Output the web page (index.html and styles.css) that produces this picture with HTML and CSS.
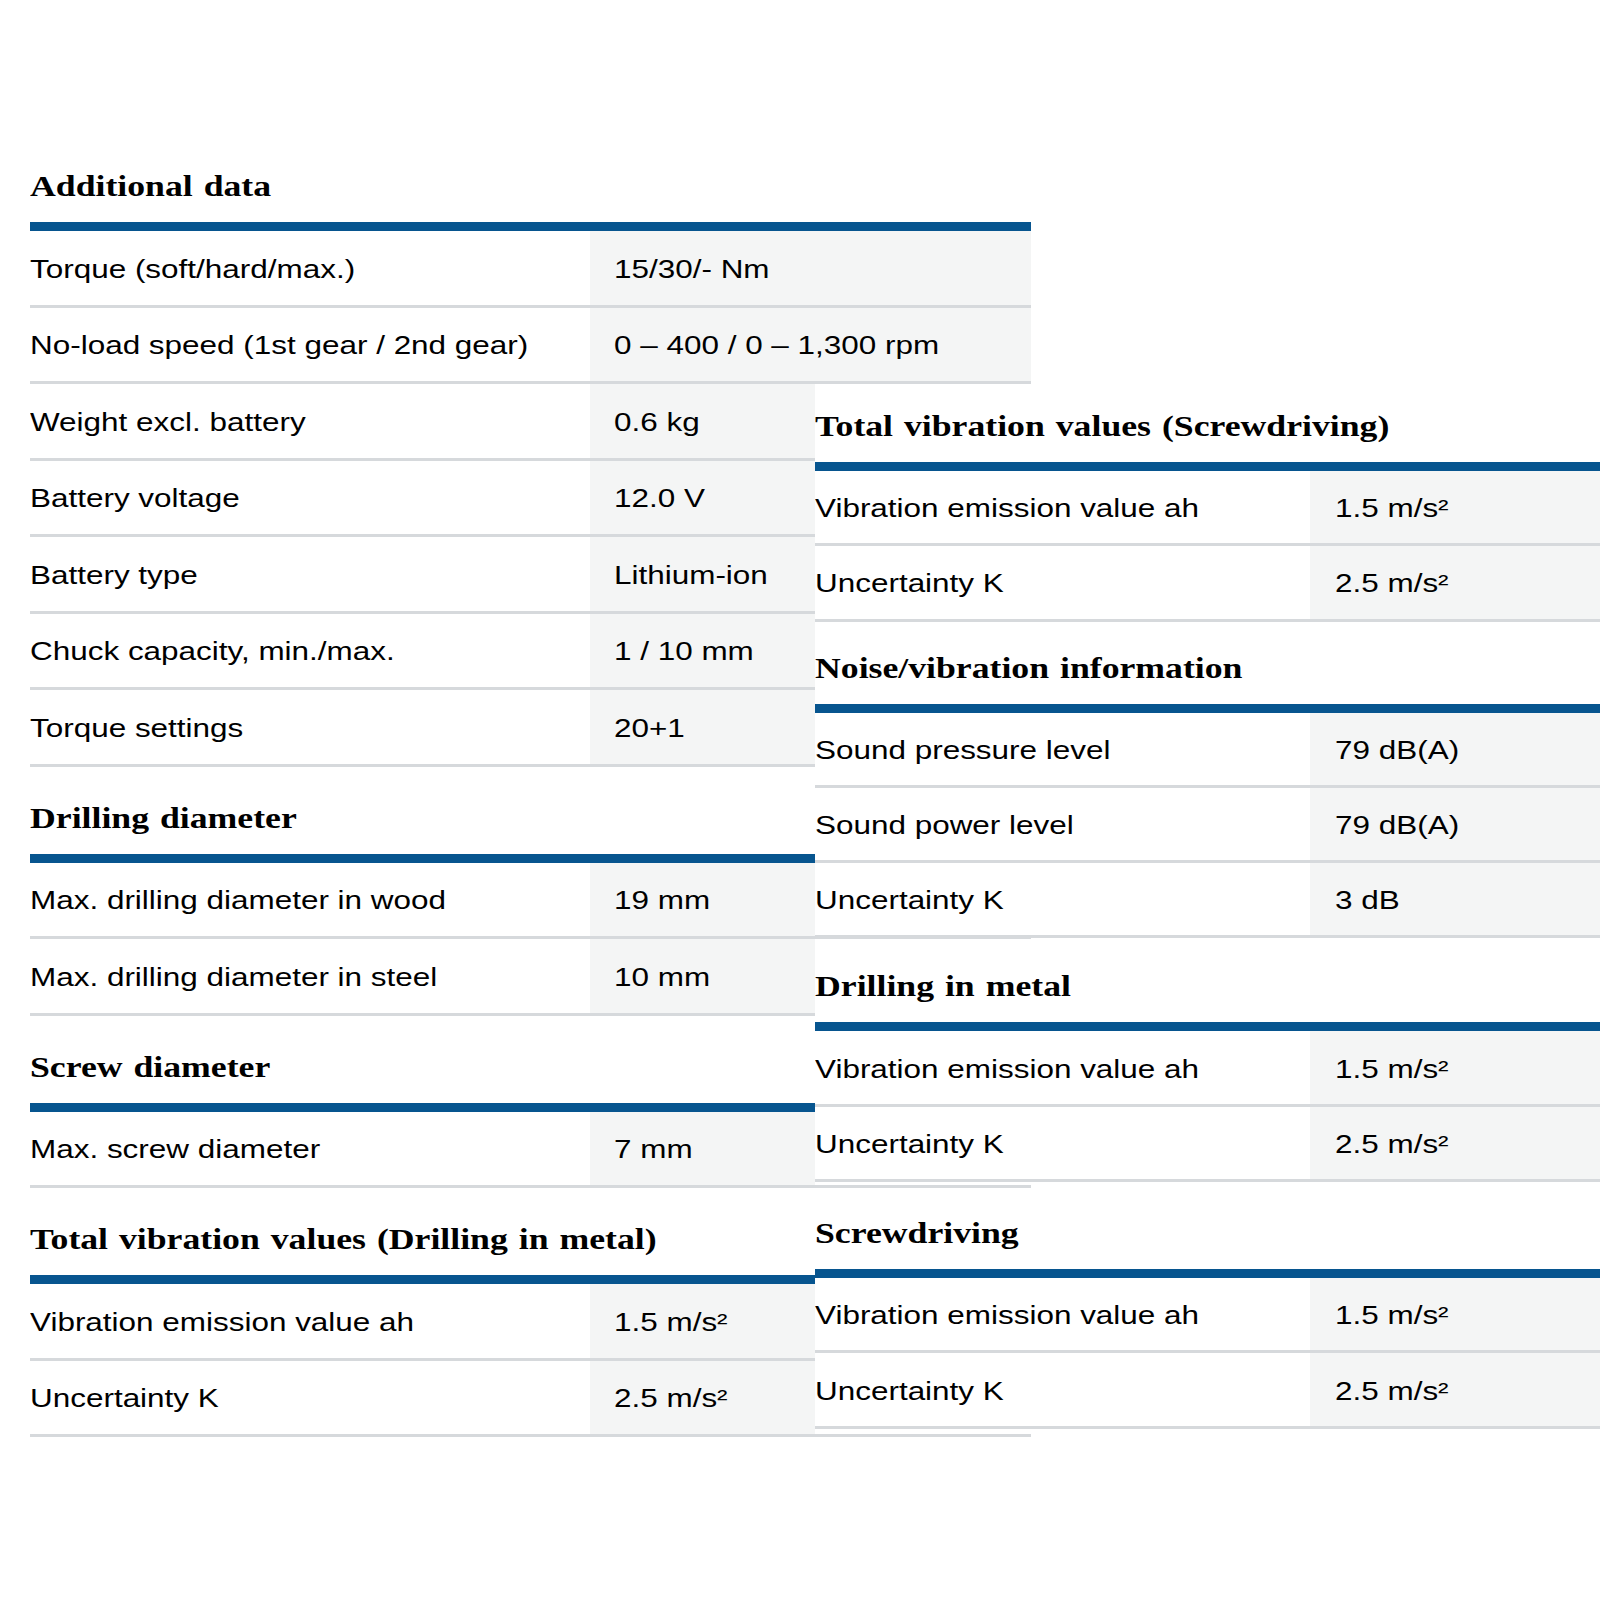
FILE: index.html
```html
<!DOCTYPE html>
<html lang="en">
<head>
<meta charset="utf-8">
<title>Technical data</title>
<link rel="stylesheet" href="styles.css">
</head>
<body>
<div class="sheet">
  <div class="col-top">
    <h3 class="sec-title"><span class="txt">Additional data</span></h3>
    <div class="row"><div class="label"><span class="txt">Torque (soft/hard/max.)</span></div><div class="value"><span class="txt">15/30/- Nm</span></div></div>
    <div class="row"><div class="label"><span class="txt">No-load speed (1st gear / 2nd gear)</span></div><div class="value"><span class="txt">0 – 400 / 0 – 1,300 rpm</span></div></div>
  </div>

  <div class="col-left">
    <div class="sec sec-cont">
      <div class="row"><div class="label"><span class="txt">Weight excl. battery</span></div><div class="value"><span class="txt">0.6 kg</span></div></div>
      <div class="row"><div class="label"><span class="txt">Battery voltage</span></div><div class="value"><span class="txt">12.0 V</span></div></div>
      <div class="row"><div class="label"><span class="txt">Battery type</span></div><div class="value"><span class="txt">Lithium-ion</span></div></div>
      <div class="row"><div class="label"><span class="txt">Chuck capacity, min./max.</span></div><div class="value"><span class="txt">1 / 10 mm</span></div></div>
      <div class="row"><div class="label"><span class="txt">Torque settings</span></div><div class="value"><span class="txt">20+1</span></div></div>
    </div>
    <div class="sec">
      <h3 class="sec-title"><span class="txt">Drilling diameter</span></h3>
      <div class="row"><div class="label"><span class="txt">Max. drilling diameter in wood</span></div><div class="value"><span class="txt">19 mm</span></div></div>
      <div class="row"><div class="label"><span class="txt">Max. drilling diameter in steel</span></div><div class="value"><span class="txt">10 mm</span></div></div>
    </div>
    <div class="sec">
      <h3 class="sec-title"><span class="txt">Screw diameter</span></h3>
      <div class="row"><div class="label"><span class="txt">Max. screw diameter</span></div><div class="value"><span class="txt">7 mm</span></div></div>
    </div>
    <div class="sec">
      <h3 class="sec-title"><span class="txt">Total vibration values (Drilling in metal)</span></h3>
      <div class="row"><div class="label"><span class="txt">Vibration emission value ah</span></div><div class="value"><span class="txt">1.5 m/s²</span></div></div>
      <div class="row"><div class="label"><span class="txt">Uncertainty K</span></div><div class="value"><span class="txt">2.5 m/s²</span></div></div>
    </div>
  </div>

  <div class="col-right">
    <div class="sec">
      <h3 class="sec-title"><span class="txt">Total vibration values (Screwdriving)</span></h3>
      <div class="row"><div class="label"><span class="txt">Vibration emission value ah</span></div><div class="value"><span class="txt">1.5 m/s²</span></div></div>
      <div class="row"><div class="label"><span class="txt">Uncertainty K</span></div><div class="value"><span class="txt">2.5 m/s²</span></div></div>
    </div>
    <div class="sec">
      <h3 class="sec-title"><span class="txt">Noise/vibration information</span></h3>
      <div class="row"><div class="label"><span class="txt">Sound pressure level</span></div><div class="value"><span class="txt">79 dB(A)</span></div></div>
      <div class="row"><div class="label"><span class="txt">Sound power level</span></div><div class="value"><span class="txt">79 dB(A)</span></div></div>
      <div class="row"><div class="label"><span class="txt">Uncertainty K</span></div><div class="value"><span class="txt">3 dB</span></div></div>
    </div>
    <div class="sec">
      <h3 class="sec-title"><span class="txt">Drilling in metal</span></h3>
      <div class="row"><div class="label"><span class="txt">Vibration emission value ah</span></div><div class="value"><span class="txt">1.5 m/s²</span></div></div>
      <div class="row"><div class="label"><span class="txt">Uncertainty K</span></div><div class="value"><span class="txt">2.5 m/s²</span></div></div>
    </div>
    <div class="sec">
      <h3 class="sec-title"><span class="txt">Screwdriving</span></h3>
      <div class="row"><div class="label"><span class="txt">Vibration emission value ah</span></div><div class="value"><span class="txt">1.5 m/s²</span></div></div>
      <div class="row"><div class="label"><span class="txt">Uncertainty K</span></div><div class="value"><span class="txt">2.5 m/s²</span></div></div>
    </div>
  </div>
</div>
</body>
</html>
```

FILE: styles.css
```css
html, body {
  margin: 0;
  padding: 0;
  background: #ffffff;
}

body {
  font-family: "Liberation Sans", Arial, sans-serif;
  color: #000000;
}

.sheet {
  display: grid;
  grid-template-columns: 30px 785px 216px 569px;
  grid-template-rows: auto auto;
  padding-top: 166px;
}

.col-top {
  grid-column: 2 / 4;
  grid-row: 1;
}

.col-left {
  grid-column: 2 / 4;
  grid-row: 2;
  align-self: start;
}

.col-right {
  grid-column: 3 / 5;
  grid-row: 2;
  align-self: start;
}

.sec {
  margin-top: 31px;
}

.sec-cont {
  margin-top: 0;
}

.col-right .sec:nth-child(1) {
  margin-top: 22px;
}

.col-right .sec:nth-child(2) {
  margin-top: 26px;
}

.col-right .sec:nth-child(3) {
  margin-top: 28px;
}

.col-right .sec:nth-child(4) {
  margin-top: 31px;
}

.txt {
  display: inline-block;
  transform: scaleX(1.258);
  transform-origin: 0 50%;
}

.sec-title {
  margin: 0;
  font-family: "Liberation Serif", "Times New Roman", serif;
  font-weight: bold;
  font-size: 30px;
  line-height: 40px;
  word-spacing: 1.7px;
  padding-bottom: 16px;
  border-bottom: 9px solid #07558f;
  white-space: nowrap;
}

.sec-title .txt {
  transform: scaleX(1.19);
}

.col-right .sec-title {
  background: #ffffff;
}

.row {
  display: grid;
  grid-template-columns: 560px 1fr;
  height: 76.5px;
  box-sizing: border-box;
  border-bottom: 3px solid #d6d9dc;
  font-size: 25px;
  white-space: nowrap;
}

.col-left .row {
  grid-template-columns: 560px 225px;
}

.col-right .row {
  grid-template-columns: 495px 1fr;
  height: 75.3px;
  background: #ffffff;
}

.label,
.value {
  display: flex;
  align-items: center;
  padding-top: 3px;
  box-sizing: border-box;
}

.value {
  background: #f4f5f5;
  padding-left: 24px;
}

.col-right .value {
  padding-left: 25px;
}
```
